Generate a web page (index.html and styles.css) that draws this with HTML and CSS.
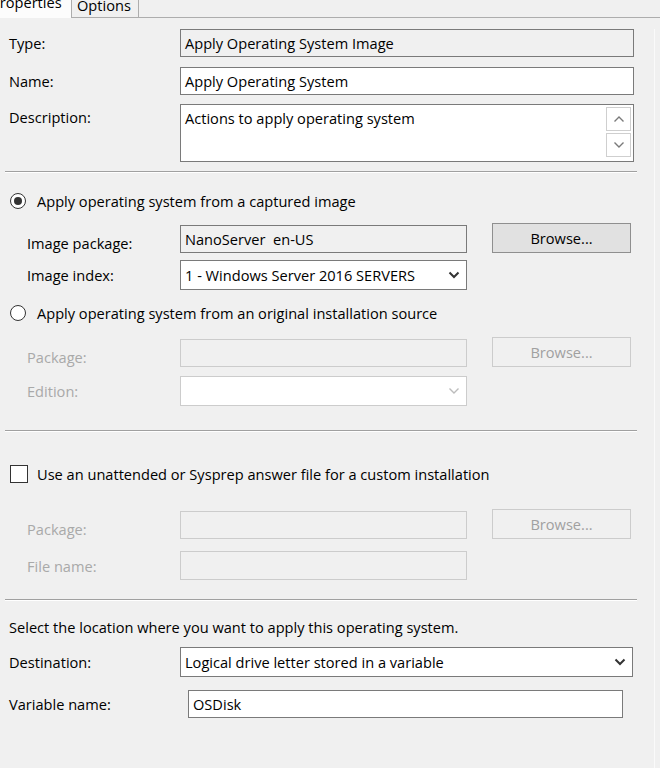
FILE: index.html
```html
<!DOCTYPE html>
<html>
<head>
<meta charset="utf-8">
<link rel="stylesheet" href="styles.css">
</head>
<body>
<div class="tabs">
  <div class="tab tab-active">Properties</div>
  <div class="tab tab-idle">Options</div>
  <div class="tab-fill"></div>
</div>
<div class="page">
  <div class="row r-type">
    <span class="lbl">Type:</span>
    <div class="field ro w-full">Apply Operating System Image</div>
  </div>
  <div class="row r-name">
    <span class="lbl">Name:</span>
    <div class="field w-full">Apply Operating System</div>
  </div>
  <div class="row r-desc">
    <span class="lbl lbl-top">Description:</span>
    <div class="field memo w-full">
      <span class="memo-text">Actions to apply operating system</span>
      <div class="scroll">
        <div class="sbtn"><svg width="12" height="8" viewBox="0 0 12 8"><path d="M1.5 6.5 L6 2 L10.5 6.5" fill="none" stroke="#7a7a7a" stroke-width="1.4"/></svg></div>
        <div class="sbtn"><svg width="12" height="8" viewBox="0 0 12 8"><path d="M1.5 1.5 L6 6 L10.5 1.5" fill="none" stroke="#7a7a7a" stroke-width="1.4"/></svg></div>
      </div>
    </div>
  </div>
  <div class="sep s1"></div>

  <div class="row r-radio1 opt">
    <span class="radio on"><span class="dot"></span></span>
    <span class="opt-text">Apply operating system from a captured image</span>
  </div>
  <div class="row r-imgpkg end">
    <span class="lbl ind">Image package:</span>
    <div class="field ro w-half">NanoServer&nbsp; en-US</div>
    <div class="btn">Browse...</div>
  </div>
  <div class="row r-imgidx">
    <span class="lbl ind">Image index:</span>
    <div class="field select w-half"><span>1 - Windows Server 2016 SERVERS</span>
      <svg class="chev" width="12" height="8" viewBox="0 0 12 8"><path d="M1.5 1.5 L6 6 L10.5 1.5" fill="none" stroke="#333" stroke-width="2"/></svg>
    </div>
  </div>
  <div class="row r-radio2 opt">
    <span class="radio"></span>
    <span class="opt-text">Apply operating system from an original installation source</span>
  </div>
  <div class="row r-pkg end dis">
    <span class="lbl ind">Package:</span>
    <div class="field ro w-half"></div>
    <div class="btn">Browse...</div>
  </div>
  <div class="row r-edition dis">
    <span class="lbl ind">Edition:</span>
    <div class="field select w-half"><span></span>
      <svg class="chev" width="12" height="8" viewBox="0 0 12 8"><path d="M1.5 1.5 L6 6 L10.5 1.5" fill="none" stroke="#bcbcbc" stroke-width="1.4"/></svg>
    </div>
  </div>
  <div class="sep s2"></div>

  <div class="row r-check opt">
    <span class="check"></span>
    <span class="opt-text">Use an unattended or Sysprep answer file for a custom installation</span>
  </div>
  <div class="row r-pkg2 end dis">
    <span class="lbl ind">Package:</span>
    <div class="field ro w-half"></div>
    <div class="btn">Browse...</div>
  </div>
  <div class="row r-file dis">
    <span class="lbl ind">File name:</span>
    <div class="field ro w-half"></div>
  </div>
  <div class="sep s3"></div>

  <div class="row r-note">
    <span class="note">Select the location where you want to apply this operating system.</span>
  </div>
  <div class="row r-dest">
    <span class="lbl">Destination:</span>
    <div class="field select w-dest"><span>Logical drive letter stored in a variable</span>
      <svg class="chev" width="12" height="8" viewBox="0 0 12 8"><path d="M1.5 1.5 L6 6 L10.5 1.5" fill="none" stroke="#333" stroke-width="2"/></svg>
    </div>
  </div>
  <div class="row r-var">
    <span class="lbl lbl-var">Variable name:</span>
    <div class="field w-var">OSDisk</div>
  </div>
</div>
</body>
</html>
```

FILE: styles.css
```css
html, body {
  margin: 0;
  padding: 0;
  background: #f0f0f0;
}
body {
  font-family: "Open Sans", "Noto Sans", sans-serif;
  font-size: 14.6px;
  color: #000;
  width: 660px;
  height: 768px;
  overflow: hidden;
}

/* tabs */
.tabs {
  display: flex;
  height: 18px;
  overflow: hidden;
}
.tab {
  box-sizing: border-box;
  line-height: 20px;
  white-space: nowrap;
}
.tab-active {
  width: 82px;
  margin-left: -10px;
  margin-top: -8px;
  height: 26px;
  background: #fcfcfc;
  border-right: 1px solid #adadad;
  padding-left: 1px;
}
.tab-idle {
  width: 67px;
  margin-top: -6px;
  height: 24px;
  background: #f0f0f0;
  border: 1px solid #adadad;
  border-left: 0;
  padding-left: 5px;
}
.tab-fill {
  flex: 1;
  border-bottom: 1px solid #adadad;
  height: 17px;
}

/* page */
.page {
  width: 655px;
  height: 750px;
  border-right: 1px solid #fafafa;
  padding-left: 9px;
  box-sizing: border-box;
}
.row {
  display: flex;
  align-items: center;
}
.row.end {
  align-items: flex-end;
}
.lbl {
  width: 171px;
  flex: none;
  white-space: nowrap;
}
.lbl.ind {
  width: 153px;
  padding-left: 18px;
}
.lbl-top {
  align-self: flex-start;
  padding-top: 3px;
}
.lbl-var {
  width: 179px;
}
.field {
  box-sizing: border-box;
  height: 28px;
  border: 1px solid #7a7a7a;
  background: #fff;
  padding-left: 4px;
  display: flex;
  align-items: center;
  white-space: nowrap;
  flex: none;
  overflow: hidden;
}
.field.ro {
  background: #f0f0f0;
}
.w-full { width: 454px; }
.w-half { width: 287px; }
.w-dest { width: 453px; }
.w-var { width: 435px; }

.memo {
  height: 58px;
  align-items: flex-start;
  padding-top: 3px;
}
.memo-text { flex: 1; }
.scroll {
  display: flex;
  flex-direction: column;
  gap: 2px;
  margin-top: -1px;
  margin-right: 2px;
}
.sbtn {
  width: 25px;
  height: 24px;
  box-sizing: border-box;
  border: 1px solid #cfcfcf;
  background: #fff;
  display: flex;
  align-items: center;
  justify-content: center;
}

.select {
  height: 30px;
  justify-content: space-between;
  padding-right: 6px;
}
.chev { flex: none; }

.btn {
  box-sizing: border-box;
  width: 139px;
  height: 30px;
  margin-left: 25px;
  border: 1px solid #8f8f8f;
  background: #e1e1e1;
  display: flex;
  align-items: center;
  justify-content: center;
  flex: none;
}

.dis { color: #a9a9a9; }
.dis .field { border-color: #cccccc; }
.dis .btn { border-color: #cccccc; background: #f0f0f0; color: #a0a0a0; }
.dis .select { background: #fff; }

.sep {
  width: 632px;
  margin-left: -4px;
  height: 0;
  border-top: 1px solid #a0a0a0;
  border-bottom: 1px solid #fff;
}

.opt { height: 20px; }
.opt-text { margin-left: 11px; white-space: nowrap; }
.radio {
  box-sizing: border-box;
  width: 16px;
  height: 16px;
  margin-left: 1px;
  border: 1px solid #333;
  border-radius: 50%;
  background: #fff;
  display: flex;
  align-items: center;
  justify-content: center;
  flex: none;
}
.dot {
  width: 8px;
  height: 8px;
  border-radius: 50%;
  background: #333;
}
.check {
  box-sizing: border-box;
  width: 18px;
  height: 18px;
  margin-left: 1px;
  border: 1px solid #333;
  background: #fff;
  flex: none;
}
.opt .check + .opt-text { margin-left: 9px; }
.note { white-space: nowrap; }

/* vertical rhythm */
.r-type { margin-top: 11px; height: 28px; }
.r-name { margin-top: 10px; height: 28px; }
.r-desc { margin-top: 9px; height: 58px; align-items: flex-start; }
.s1 { margin-top: 9px; }
.r-radio1 { margin-top: 18px; }
.r-imgpkg { margin-top: 12px; height: 30px; }
.r-imgidx { margin-top: 7px; height: 30px; }
.r-radio2 { margin-top: 13px; }
.r-pkg { margin-top: 14px; height: 30px; }
.r-edition { margin-top: 9px; height: 30px; }
.s2 { margin-top: 24px; }
.r-check { margin-top: 32px; }
.r-pkg2 { margin-top: 25px; height: 30px; }
.r-file { margin-top: 12px; height: 29px; }
.r-file .field { height: 29px; }
.s3 { margin-top: 19px; }
.r-note { margin-top: 16px; height: 20px; }
.r-dest { margin-top: 10px; height: 30px; }
.r-var { margin-top: 13px; height: 28px; }
```
